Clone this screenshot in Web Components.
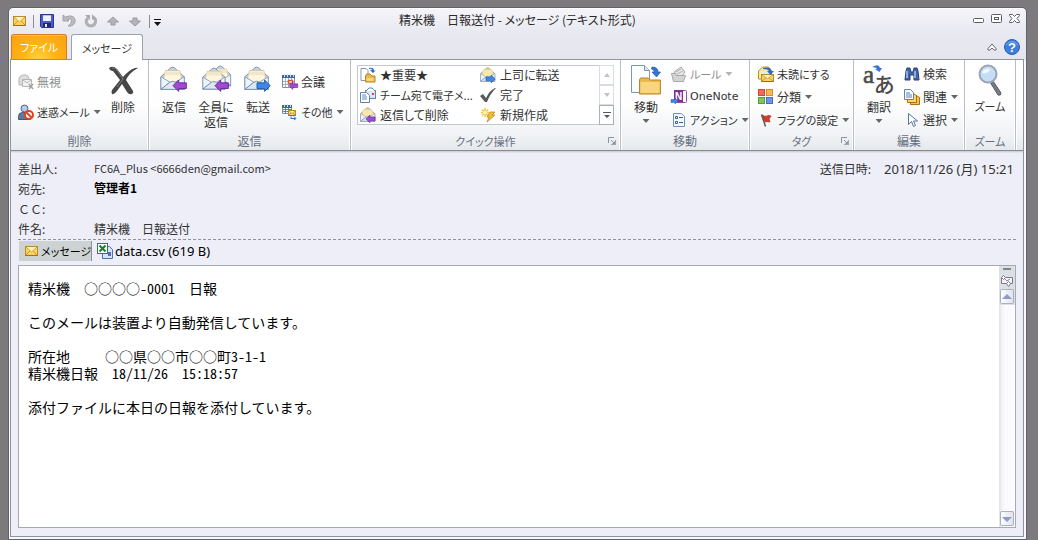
<!DOCTYPE html>
<html lang="ja">
<head>
<meta charset="utf-8">
<title>精米機　日報送付 - メッセージ (テキスト形式)</title>
<style>
  html { height: 100%; }
  body {
    margin: 0; min-height: 100%; box-sizing: border-box; padding: 7px 11px 0 8px; display: flex;
    background: #7d7a7d; color: #333;
    font: 12px/16px "Noto Sans CJK JP", sans-serif;
    font-feature-settings: "palt";
  }
  mail-window { flex: 1; min-width: 0; }
</style>
</head>
<body>
<mail-window></mail-window>

<template id="mail-window">
  <style>
    :host { display: flex; flex-direction: column; border: 1px solid #5f646c; border-radius: 5px 5px 0 0;
      background: linear-gradient(#f5f5f9 0, #e9e9f1 24px, #e4e5ee 52px, #f8f8fd 53px); box-shadow: inset 0 1px #fff, inset 1px 0 #fff; }
    .pane { flex: 1; display: flex; flex-direction: column; margin: 0 2px 2px 1px; border: 1px solid #8c949e; background: #eeeef8; min-height: 0; }
    message-body { flex: 1; margin: 4px 7px 8px; }
  </style>
  <title-bar>精米機　日報送付 - メッセージ (テキスト形式)</title-bar>
  <tab-strip></tab-strip>
  <main class="pane">
    <ribbon-bar></ribbon-bar>
    <message-header></message-header>
    <attachment-bar></attachment-bar>
    <message-body></message-body>
  </main>
</template>

<template id="title-bar">
  <style>
    :host { display: grid; grid-template-columns: 1fr auto 1fr; height: 26px; align-items: center; }
    .quick, .controls { display: flex; align-items: center; }
    .quick { padding-left: 2px; gap: 6px; }
    .controls { justify-content: flex-end; gap: 2px; padding-right: 4px; align-self: start; margin-top: 2px; }
    button { all: unset; display: flex; height: 16px; width: 16px; justify-content: center; }
    i { width: 1px; height: 13px; background: #8b8d94; margin: 0 -1px 0 0; }
    .menu { width: 8px; margin-left: -2px; }
    h1 { margin: 0; font: inherit; line-height: 16px; color: #2a2a2a; }
    h1 { margin-top: -2px; }
  </style>
  <div class="quick">
    <svg-icon name="mail"></svg-icon><i></i>
    <button aria-label="上書き保存"><svg-icon name="save"></svg-icon></button>
    <button aria-label="元に戻す"><svg-icon name="undo"></svg-icon></button>
    <button aria-label="繰り返し"><svg-icon name="redo"></svg-icon></button>
    <button aria-label="前のアイテム"><svg-icon name="up"></svg-icon></button>
    <button aria-label="次のアイテム"><svg-icon name="down"></svg-icon></button><i></i>
    <button class="menu" aria-label="カスタマイズ"><svg-icon name="custom"></svg-icon></button>
  </div>
  <h1><slot></slot></h1>
  <div class="controls">
    <button aria-label="最小化"><svg-icon name="min"></svg-icon></button>
    <button aria-label="最大化"><svg-icon name="max"></svg-icon></button>
    <button aria-label="閉じる"><svg-icon name="close"></svg-icon></button>
  </div>
</template>

<template id="tab-strip">
  <style>
    :host { display: flex; height: 25px; padding-left: 2px; padding-right: 6px; align-items: flex-end; font-size: 11px; }
    button { all: unset; box-sizing: border-box; text-align: center; }
    .file { width: 56px; height: 25px; border: 1px solid #df7a12; border-bottom: 0; border-radius: 3px 3px 0 0; color: #fff;
      background: radial-gradient(ellipse at 50% 110%, #ffd83e 0, #ffb414 45%, #fba014 100%); line-height: 24px; box-shadow: inset 0 1px #ffc25a; }
    .tab { width: 72px; height: 26px; margin: 0 0 -1px 4px; border: 1px solid #9aa2ac; border-bottom: 0; border-radius: 3px 3px 0 0; background: #fff; line-height: 24px; position: relative; z-index: 1; }
    .end { margin-left: auto; display: flex; gap: 6px; align-self: center; }
    .end button { height: 16px; }
  </style>
  <button class="file">ファイル</button>
  <button class="tab">メッセージ</button>
  <div class="end">
    <button aria-label="リボンの最小化"><svg-icon name="chevron"></svg-icon></button>
    <button aria-label="ヘルプ"><svg-icon name="help"></svg-icon></button>
  </div>
</template>

<template id="ribbon-bar">
  <style>
    :host { display: flex; height: 90px; border-bottom: 1px solid #858b90; box-shadow: 0 1px #cfd3d8, 0 2px #e0e3e9;
      background: linear-gradient(#fff 0, #fefefe 45px, #f0f2f5 75px, #e6e9ec 100%); }
    ribbon-group { min-width: 0; }
    .col { display: flex; flex-direction: column; gap: 1px; padding-top: 3px; }
    .two { gap: 8px; padding-top: 11px; }
    .delete { flex: 0 0 138px; --start: 7px; }
    .delete .col { width: 85px; }
    .reply { flex: 0 0 202px; --start: 4px; }
    .reply ribbon-button[large] { width: 42px; }
    .reply .col { margin-left: 3px; }
    .quick { flex: 0 0 270px; --start: 6px; }
    .move { flex: 0 0 129px; --start: 5px; }
    .tags { flex: 0 0 104px; --start: 8px; }
    .edit { flex: 0 0 111px; --start: 5px; }
    .move .col, .edit .col { margin-left: 5px; }
    .zoom { flex: 0 0 51px; --start: 5px; }
  </style>
  <ribbon-group class="delete" label="削除">
    <div class="col two">
      <ribbon-button icon="ignore" disabled>無視</ribbon-button>
      <ribbon-button icon="junk" menu kana>迷惑メール</ribbon-button>
    </div>
    <ribbon-button large icon="delete">削除</ribbon-button>
  </ribbon-group>
  <ribbon-group class="reply" label="返信">
    <ribbon-button large icon="reply">返信</ribbon-button>
    <ribbon-button large icon="replyall">全員に<br>返信</ribbon-button>
    <ribbon-button large icon="forward">転送</ribbon-button>
    <div class="col two">
      <ribbon-button icon="meeting">会議</ribbon-button>
      <ribbon-button icon="other" menu kana>その他</ribbon-button>
    </div>
  </ribbon-group>
  <ribbon-group class="quick" label="クイック操作" launcher kana><quick-steps></quick-steps></ribbon-group>
  <ribbon-group class="move" label="移動">
    <ribbon-button large icon="move" menu>移動</ribbon-button>
    <div class="col">
      <ribbon-button icon="rules" menu disabled kana>ルール</ribbon-button>
      <ribbon-button icon="onenote" latin>OneNote</ribbon-button>
      <ribbon-button icon="actions" menu kana>アクション</ribbon-button>
    </div>
  </ribbon-group>
  <ribbon-group class="tags" label="タグ" launcher kana>
    <div class="col">
      <ribbon-button icon="unread" kana>未読にする</ribbon-button>
      <ribbon-button icon="category" menu>分類</ribbon-button>
      <ribbon-button icon="flag" menu kana>フラグの設定</ribbon-button>
    </div>
  </ribbon-group>
  <ribbon-group class="edit" label="編集">
    <ribbon-button large icon="translate" menu>翻訳</ribbon-button>
    <div class="col">
      <ribbon-button icon="find">検索</ribbon-button>
      <ribbon-button icon="related" menu>関連</ribbon-button>
      <ribbon-button icon="select" menu>選択</ribbon-button>
    </div>
  </ribbon-group>
  <ribbon-group class="zoom" label="ズーム" kana>
    <ribbon-button large icon="zoom" kana>ズーム</ribbon-button>
  </ribbon-group>
</template>

<template id="ribbon-group">
  <style>
    :host { display: flex; flex-direction: column; box-sizing: border-box; border-right: 1px solid #b9bec5; box-shadow: inset -1px 0 #fff, 1px 0 #fff; }
    .items { display: flex; height: 72px; padding-left: var(--start); }
    footer { display: grid; grid-template-columns: 1fr auto 1fr; align-items: center; height: 18px; color: #66707f; }
    button { all: unset; grid-column: 3; justify-self: end; width: 8px; height: 8px; margin-right: 4px; display: flex; }
    span { grid-column: 2; }
    :host([kana]) span { font-size: 11px; }
    :host(:not([launcher])) button { display: none; }
  </style>
  <div class="items"><slot></slot></div>
  <footer><span></span><button aria-label="詳細"><svg-icon name="launcher"></svg-icon></button></footer>
</template>

<template id="ribbon-button">
  <style>
    :host { display: block; }
    button { all: unset; display: flex; align-items: center; gap: 3px; height: 22px; white-space: nowrap; }
    :host([large]) { width: 40px; padding-top: 4px; }
    :host([large]) button { flex-direction: column; height: auto; width: 100%; text-align: center; line-height: 15px; }
    .menu { display: none; flex: none; width: 7px; height: 4px; background: #666; clip-path: polygon(0 0, 100% 0, 50% 100%); margin-left: 1px; }
    :host([menu]) .menu { display: block; }
    :host([menu][large]) .menu { margin: 2px 0 0; }
    :host([disabled]) button { color: #8d8d8d; }
    :host([disabled]) .menu { background: #b5b5b5; }
    :host([kana]) span { font-size: 11px; }
    :host([latin]) span { font: 11px/16px "DejaVu Sans", sans-serif; }
  </style>
  <button><svg-icon></svg-icon><span><slot></slot></span><i class="menu"></i></button>
</template>

<template id="quick-steps">
  <style>
    :host { display: flex; width: 257px; height: 60px; margin-top: 5px; box-sizing: border-box; background: #fff; box-shadow: inset 0 0 0 1px #c3c8ce; }
    .list { display: grid; flex: 1; grid-template: repeat(3, 20px) / 120px 1fr; padding-left: 3px; }
    button { all: unset; display: flex; gap: 4px; align-items: center; white-space: nowrap; }
    .kana { font-size: 11px; }
    .scroll { width: 15px; display: grid; grid-template-rows: repeat(3, 20px); }
    .scroll button { justify-content: center; box-shadow: inset 0 0 0 1px #d9dde1; }
    .scroll button:last-child { box-shadow: inset 0 0 0 1px #aab0b8; }
  </style>
  <div class="list">
    <button><svg-icon name="important"></svg-icon>★重要★</button>
    <button><svg-icon name="boss"></svg-icon>上司に転送</button>
    <button class="kana"><svg-icon name="team"></svg-icon>チーム宛て電子メ...</button>
    <button><svg-icon name="done"></svg-icon>完了</button>
    <button><svg-icon name="replydel"></svg-icon>返信して削除</button>
    <button><svg-icon name="newstep"></svg-icon>新規作成</button>
  </div>
  <div class="scroll">
    <button aria-label="上へ"><svg-icon name="tinyup"></svg-icon></button>
    <button aria-label="下へ"><svg-icon name="tinydown"></svg-icon></button>
    <button aria-label="その他"><svg-icon name="more"></svg-icon></button>
  </div>
</template>

<template id="message-header">
  <style>
    :host { display: flex; justify-content: space-between; margin: 0 7px; padding: 8px 0 0; border-bottom: 1px dashed #92949a; }
    dl { margin: 0; display: grid; grid-template-columns: 76px auto; grid-auto-rows: 20px; line-height: 20px; }
    dd { margin: 0; }
    .sent { grid-template-columns: auto auto; column-gap: 13px; padding-right: 2px; }
    .sent dd { font: 13px/20px "Noto Sans", "Noto Sans CJK JP", sans-serif; }
    .to { font-weight: 700; color: #000; line-height: 18px; }
    .from { font-size: 11px; line-height: 18px; }
    .wide { font-feature-settings: "palt" 0; }
  </style>
  <dl>
    <dt>差出人:</dt><dd class="from">FC6A_Plus &lt;6666den@gmail.com&gt;</dd>
    <dt>宛先:</dt><dd class="to">管理者1</dd>
    <dt class="wide">ＣＣ:</dt><dd></dd>
    <dt>件名:</dt><dd>精米機　日報送付</dd>
  </dl>
  <dl class="sent"><dt>送信日時:</dt><dd>2018/11/26 (月) 15:21</dd></dl>
</template>

<template id="attachment-bar">
  <style>
    :host { display: flex; margin: 0 8px; height: 20px; padding-top: 1px; color: #000; white-space: nowrap; }
    button, a { all: unset; display: flex; align-items: center; gap: 2px; height: 20px; box-sizing: border-box; }
    button { width: 73px; padding-left: 4px; background: #cdd2d3; border-right: 1px solid #8c9296; font-size: 11px; }
    a { padding-left: 5px; font: 13px/16px "Noto Sans", sans-serif; }
  </style>
  <button><svg-icon name="mail"></svg-icon>メッセージ</button>
  <a href="#data.csv"><svg-icon name="csv"></svg-icon>data.csv (619 B)</a>
</template>

<template id="message-body">
  <style>
    :host { display: flex; border: 1px solid #a3abb4; background: #fff; min-height: 200px; color: #000; }
    article { flex: 1; padding: 14px 9px; font-size: 14px; line-height: 17px; white-space: pre-wrap; font-feature-settings: "palt" 0; }
    p { margin: 0; min-height: 17px; }
    .half { font-feature-settings: "hwid", "palt" 0; }
    aside { width: 16px; display: flex; flex-direction: column; justify-content: space-between; background: linear-gradient(90deg, #e4e4ec 1px, #f4f4f8 3px, #fcf9ff 6px); }
    .top { background: #dddfe6; display: flex; flex-direction: column; align-items: center; }
    .split { width: 8px; height: 2px; margin: 2px 0; background: #7e8786; }
    button { all: unset; display: flex; width: 14px; height: 15px; margin: 1px; border-radius: 2px; box-shadow: inset 0 0 0 1px #aab0bc; background: linear-gradient(90deg, #fff, #dfe1ea); align-items: center; justify-content: center; }
  </style>
  <article></article>
  <aside>
    <div class="top"><div class="split"></div><svg-icon name="ruler"></svg-icon><button aria-label="上へスクロール"><svg-icon name="sup"></svg-icon></button></div>
    <button aria-label="下へスクロール"><svg-icon name="sdown"></svg-icon></button>
  </aside>
</template>

<script>
const mini = (x, y, s) => `<g transform="translate(${x} ${y}) scale(${s})">
  <path d="M1 12 12 2q2-1.500 4 0l11 10v14H1z" fill="#c2d6ea" stroke="#7288a6"/>
  <path d="M4 14 6 5h16l2 9-8 7h-4z" fill="#fff6dc" stroke="#d6c69c"/><path d="M6 6h16l1 4H5z" fill="#efe6cc"/>
  <path d="M1 12v14l10-8zM27 12v14l-10-8z" fill="#edf5fc" stroke="#869bb5"/>
  <path d="M1 26 11 18q3-2 6 0l10 8z" fill="#dce9f5" stroke="#7288a6"/></g>`;
const left = (x, y, s) => `<path transform="translate(${x} ${y}) scale(${s})" d="M0 6 6 0v3h8v6H6v3z" fill="#a14ad0" stroke="#65269b"/>`;
const right = (x, y, s) => `<path transform="translate(${x} ${y}) scale(${s})" d="M14 6 8 0v3H0v6h8v3z" fill="#3f86e6" stroke="#2158ad"/>`;
const yenv = (x, y, w, h) => `<rect x="${x}" y="${y}" width="${w}" height="${h}" fill="#fbd45e" stroke="#b98a2e"/><path d="M${x + .5} ${y + .5} l${w / 2 - .5} ${h * .6} l${w / 2 - .5} ${-h * .6}z" fill="#fff3bd"/><path d="M${x} ${y} l${w / 2} ${h * .6} l${w / 2} ${-h * .6} M${x} ${y + h} l${w * .36} ${-h * .5} M${x + w} ${y + h} l${-w * .36} ${-h * .5}" fill="none" stroke="#c08c24" stroke-width=".8"/><path d="M${x} ${y + h}h${w}" stroke="#a86a12"/>`;
const folder = (x, y, w, h) => `<path d="M${x} ${y + h}V${y + 2}l1-2h${w * .35}l2 2h${w * .6 - 3}V${y + h}z" fill="#e9ba4b" stroke="#b9842b"/><path d="M${x + 1} ${y + h - 1}V${y + 4}H${x + w - 2}v${h - 5}z" fill="#f9d67d"/>`;
const gold = art => art.replace(/#c2d6ea/g, '#f7cf62').replace('#fff6dc', '#ffe9a3');
const ball = '<path d="M.5 15.500v-3q0-4 4-4h4q4 0 4 4v3z" fill="#62799b" stroke="#41587c"/><circle cx="6.500" cy="4.500" r="3.500" fill="#b5cbe5" stroke="#4b678f"/>';

const ICONS = {
  mail: [16, 16, yenv(2.5, 3.5, 12, 9)],
  save: [16, 16, '<path d="M1.500 1.500h13v13h-12l-1-1z" fill="#4b59d2" stroke="#2b3596"/><path d="M4 2h8v6H4z" fill="#eef2fd"/><path d="M4 2h8v1H4z" fill="#b6c2ee"/><path d="M4 10h8v4H4z" fill="#242a5c"/><path d="M6 11h2v3H6z" fill="#dfe4f6"/>'],
  undo: [16, 16, '<path d="M2 2v6h6L6.500 6.500Q10.500 5 10.500 8q0 3-3.500 5h3q5-2 4-6.500Q12.500 1 4.500 4z" fill="#bbbbc0" stroke="#a2a2a8"/>'],
  redo: [16, 16, '<path d="M5 5Q2.500 7 3.500 10q1.500 3 4.500 3 4-.5 4.500-4Q13 6 10.500 4.500" fill="none" stroke="#b0b0b5" stroke-width="3"/><path d="M9 1v5.500h5zM2 2h5v5z" fill="#a9a9af"/>'],
  up: [16, 16, '<path d="M8 4l5.500 5H10v3H6V9H2.500z" fill="#b4b4ba" stroke="#9999a0"/>'],
  down: [16, 16, '<path d="M8 13 2.500 8H6V5h4v3h3.500z" fill="#b4b4ba" stroke="#9999a0"/>'],
  custom: [8, 16, '<path d="M1 6h7v1H1zM1 9h7l-3.500 4z" fill="#111"/>'],
  min: [16, 16, '<rect x="3.500" y="8.500" width="10" height="4" rx="1" fill="#fff" stroke="#5a5d64"/>'],
  max: [16, 16, '<rect x="3.500" y="4.500" width="10" height="8" rx="1" fill="#fff" stroke="#5a5d64"/><rect x="6.500" y="7.500" width="4" height="2" fill="#fff" stroke="#5a5d64"/>'],
  close: [16, 16, '<path d="M3.500 4.500h3l2 2 2-2h3v1L11 8.500l2.500 3v1h-3l-2-2-2 2h-3v-1L6 8.500l-2.500-3z" fill="#fff" stroke="#5a5d64"/>'],
  chevron: [12, 16, '<path d="M2 9.500 6 5l4 4.500V11H8L6 9l-2 2H2z" fill="#fff" stroke="#63666b"/>'],
  help: [16, 16, '<circle cx="8" cy="8" r="7.500" fill="#3f7ddb" stroke="#2862bc"/><path d="M2 6q6-7 12 0" fill="none" stroke="#78a7ee"/><text x="8" y="12.500" text-anchor="middle" font-family="Liberation Sans" font-weight="700" font-size="13" fill="#fff">?</text>'],
  launcher: [8, 8, '<path d="M.5 6V.5H6" fill="none" stroke="#8a929b"/><path d="M3 3l3 3" fill="none" stroke="#8a929b"/><path d="M3 7.500h5M7.500 3v5" stroke="#a0a7af"/><path d="M4 7l3-3v3z" fill="#8a929b"/>'],
  ignore: [16, 16, '<path d="M1 5q0-3 4-4h3q3 1 3 4v6H1z" fill="#dedede" stroke="#b5b5b5"/><path d="M4.500 5.500h9v7h-9z" fill="#f1f1f1" stroke="#b5b5b5"/><path d="M5 6l4 3 4-3" fill="none" stroke="#b5b5b5"/><path d="M11 10l4 5M15 10l-4 5" stroke="#a3a3a3" stroke-width="1.500"/>'],
  junk: [16, 16, ball + '<circle cx="11" cy="11" r="4" fill="#fff" stroke="#e3431e" stroke-width="2"/><path d="M8 8l6 6" stroke="#e3431e" stroke-width="2"/>'],
  delete: [32, 32, '<path d="M2 4q4-3 8 1l6 8q6-7 12-9 2-.5 3 0-9 5-12 12l7 11q1 2-1 3-3 1-5-2l-5-8-5 7q-3 4-5 3-1-2 0-4l8-10-7-9q-3 0-4-3z" fill="#474747"/><path d="M5 4q3-1 5 2l6 9-6 8" fill="none" stroke="#7a7a7a"/>'],
  reply: [32, 32, mini(2, 2, .9) + left(15, 16, .95)],
  replyall: [32, 32, mini(9, 1, .8) + mini(2, 3, .85) + left(15, 16, .95)],
  forward: [32, 32, mini(2, 2, .9) + right(15, 16, .95)],
  meeting: [16, 16, '<path d="M.5 1.500h12v12H.5z" fill="#fff" stroke="#7b8fb3"/><path d="M0 1h13v3H0z" fill="#3d62a8"/><path d="M2 0h1v3H2zM5 0h1v3H5zM8 0h1v3H8zM11 0h1v3h-1z" fill="#cfe0fa"/><path d="M1 7.500h11M1 10.500h11M3.500 4v9M6.500 4v9M9.500 4v9" stroke="#9fb1cf"/><rect x="6.500" y="6.500" width="4" height="3" fill="#fff" stroke="#e0542b" stroke-width="1.500"/>' + left(7, 8, .62)],
  other: [16, 16, '<path d="M.5 1.500h9v8h-9z" fill="#fff" stroke="#7b8fb3"/><path d="M0 1h10v3H0z" fill="#3d62a8"/><path d="M2 0h1v3H2zM5 0h1v3H5zM8 0h1v3H8z" fill="#cfe0fa"/><path d="M1 5.500h9M1 7.500h9M3.500 4v5M6.500 4v5" stroke="#5f7fb6"/>' + yenv(6.5, 6.5, 7, 5) + '<path d="M9 12.500v2h4M12 12.500l2 2-2 1.500" fill="none" stroke="#2e69c2"/>'],
  important: [16, 16, '<path d="M1 1.500h5l2 2v10H1z" fill="#fff" stroke="#8796ab"/><path d="M9 1q5-1 5 3l2-1-3 3-3-3h2q0-2-3-1z" fill="#2e69c2"/>' + folder(5.5, 7, 10, 8)],
  boss: [16, 16, gold(mini(0, 0, .55)) + right(6, 8, .65)],
  team: [16, 16, '<rect x="5.500" y="3.500" width="10" height="8" fill="#d9e8f8" stroke="#6484ad"/><path d="M6 4l3-3h3l3 3" fill="#fff" stroke="#6484ad"/><rect x="12" y="6" width="2" height="2" fill="#e0442a"/><path d="M.5 5.500h6l3 3v7h-9z" fill="#fff" stroke="#6484ad"/><path d="M2 8h4M2 10h5M2 12h5" stroke="#5b88c4"/>'],
  done: [16, 16, '<path d="M0 9l3-2 3 4Q10 3 15 1h1Q10 7 7 15H5z" fill="#5a5a5a"/>'],
  replydel: [16, 16, gold(mini(0, 0, .55)) + left(6, 8, .65)],
  newstep: [16, 16, '<path d="M5 1v9M1 5.500h8M2 2.500l6 6M8 2.500l-6 6" stroke="#f3c63d" stroke-width="1.500"/><circle cx="5" cy="5.500" r="2" fill="#fff4b5"/><path d="M10 5h5l-3 3h3l-8 7 2-5H7z" fill="#f7bd35" stroke="#b97b1d" stroke-width=".7"/>'],
  tinyup: [8, 6, '<path d="M4 1l3 4H1z" fill="#bfc3c8"/>'],
  tinydown: [8, 6, '<path d="M4 5L1 1h6z" fill="#bfc3c8"/>'],
  more: [8, 8, '<path d="M0 1h8v1H0zM1 4h6L4 7z" fill="#54585e"/>'],
  move: [32, 32, '<path d="M1.500 1.500h13l5 5v22h-18z" fill="#fbfdff" stroke="#7f95b2"/><path d="M14.500 1.500v5h5" fill="#dbe6f2" stroke="#7f95b2"/><path d="M22 3q6 0 6 5h2.500L26.500 13 22 8h2.500q0-2-3-3z" fill="#3474d4" stroke="#2456a5" stroke-width=".7"/>' + folder(9.5, 14, 22, 16)],
  rules: [16, 16, '<path d="M3 6l7-5 4 5-3 4H5z" fill="#e6e6e6" stroke="#a8a8a8"/><path d="M5 6l5-3M6 8l6-3" stroke="#b5b5b5"/><path d="M.5 7.500h4l1 2h9l-2 6h-10z" fill="#d3d3d3" stroke="#a8a8a8"/>'],
  onenote: [16, 16, '<rect x="4.500" y="1.500" width="11" height="12" rx="1" fill="#fff" stroke="#9a4aa5"/><path d="M3 1h9v12H3z" fill="#82308f"/><text x="7.500" y="11" text-anchor="middle" font-family="Liberation Sans" font-weight="700" font-size="10" fill="#fff">N</text>' + right(0, 9, .5)],
  actions: [16, 16, '<path d="M2.500 1.500h8l3 3v10h-11z" fill="#f2f7fc" stroke="#7290b6"/><path d="M4.500 4.500h2v2h-2zM4.500 9.500h2v2h-2z" fill="#fff" stroke="#3d5d8d"/><path d="M8 5.500h4M8 10.500h4" stroke="#3d5d8d"/>'],
  unread: [16, 16, '<path d="M.5 13V5l4-4h6l3 4v8z" fill="#ffe9a3" stroke="#b98b2c"/><path d="M3 5h8v6H3z" fill="#dceafa"/>' + yenv(3.5, 8.5, 12, 7) + '<path d="M5 2q8-2 8.500 3H16l-3.500 4L9 5h2q-1-2-6-2z" fill="#2e69c2"/>'],
  category: [16, 16, '<rect x=".5" y=".5" width="6" height="6" fill="#ef6a5c" stroke="#d54839"/><rect x="8.500" y=".5" width="6" height="6" fill="#f7b654" stroke="#df8e29"/><rect x=".5" y="8.500" width="6" height="6" fill="#81c65a" stroke="#56a032"/><rect x="8.500" y="8.500" width="6" height="6" fill="#6a95ea" stroke="#416cc9"/>'],
  flag: [16, 16, '<path d="M4 3q3 2 5 1t4 0l-2 3 1 3q-3-1-5 0z" fill="#dd3b22" stroke="#a72a18" stroke-width=".7"/><path d="M3.500 2.500l4 12" stroke="#5c5c5c" stroke-width="1.500"/>'],
  translate: [32, 32, '<text x="0" y="19" font-family="Liberation Serif" font-size="25" fill="#4b4b4b" stroke="#4b4b4b" stroke-width=".6">a</text><text x="11" y="28" font-family="Noto Sans CJK JP" font-weight="500" font-size="21" fill="#4b4b4b">あ</text><path d="M9 3q7-4 8 1h2l-2.500 4-4.500-3h2q-1-2-5-2z" fill="#3474d4"/>'],
  find: [16, 16, '<path d="M2 5l1-3h3l1 4h2l1-4h3l1 3 1 9h-5V9H6v5H1z" fill="#4264a6" stroke="#263f77"/><path d="M3 5v7M11 5v7" stroke="#a9c3ee" stroke-width="1.500"/>'],
  related: [16, 16, '<path d="M6.500 6.500h6l3 2v7h-9z" fill="#f7c24a" stroke="#a8701b"/><path d="M3.500 4.500h6l3 2v7h-9z" fill="#ffd56a" stroke="#a8701b"/><path d="M.5.500h6l3 3v7h-9z" fill="#f5faff" stroke="#6484ad"/><path d="M2 4h4M2 6h6M2 8h6" stroke="#5b88c4"/>'],
  select: [16, 16, '<path d="M4.500 1.500v11l3-3 2 5 2-1-2-4.500h4z" fill="#fff" stroke="#5674aa"/>'],
  zoom: [32, 32, '<path d="M16 18l3-1 8 12q0 3-3 2z" fill="#777c86" stroke="#545861"/><circle cx="14" cy="10" r="8.500" fill="#c5def6" stroke="#9ba5b4" stroke-width="2"/><path d="M8 9q2-5 8-4-1 5-8 4z" fill="#f3faff"/>'],
  csv: [16, 16, '<path d="M5.500 3.500h7l3 3v9h-10z" fill="#d4e4f7" stroke="#4e73a8"/><rect x=".5" y=".5" width="10" height="10" fill="#fff" stroke="#27843b"/><path d="M2.500 2.500l6 6M8.500 2.500l-6 6" stroke="#1e7c34" stroke-width="2"/><path d="M11 9h3v4h-3z" fill="#4e73a8"/>'],
  ruler: [12, 16, '<path d="M.5 5.500h11v6H.5z" fill="#f8f2fb" stroke="#7c7b82"/><path d="M2.500 3.500l2 2-2 2-2-2zM7.500 9.500l2 2-2 3-2-3z" fill="#fff" stroke="#7c7b82"/><path d="M4 7l2 2 3-2" fill="none" stroke="#8d8aa0"/>'],
  sup: [10, 6, '<path d="M5 0l5 5H0z" fill="#8f9bc9"/>'],
  sdown: [10, 6, '<path d="M5 6L0 1h10z" fill="#8f9bc9"/>'],
};

class SvgIcon extends HTMLElement {
  static observedAttributes = ['name'];
  constructor() { super(); this.attachShadow({ mode: 'open' }); }
  attributeChangedCallback() {
    const [w, h, art] = ICONS[this.getAttribute('name')];
    this.shadowRoot.innerHTML = `<style>:host{display:block;flex:none}svg{display:block;overflow:visible}</style><svg width="${w}" height="${h}" viewBox="0 0 ${w} ${h}" aria-hidden="true">${art}</svg>`;
  }
}
customElements.define('svg-icon', SvgIcon);

class TemplateElement extends HTMLElement {
  constructor() {
    super();
    this.attachShadow({ mode: 'open' }).append(document.getElementById(this.localName).content.cloneNode(true));
  }
}
class RibbonGroup extends TemplateElement {
  connectedCallback() { this.shadowRoot.querySelector('span').textContent = this.getAttribute('label'); }
}
class RibbonButton extends TemplateElement {
  connectedCallback() {
    this.shadowRoot.querySelector('svg-icon').setAttribute('name', this.getAttribute('icon'));
    this.shadowRoot.querySelector('button').disabled = this.hasAttribute('disabled');
  }
}
// Plain-text mail: ASCII runs are set half-width so that they line up with the full-width grid.
class MessageBody extends TemplateElement {
  connectedCallback() {
    const lines = ['精米機　○○○○-0001　日報', '', 'このメールは装置より自動発信しています。', '', '所在地　　 ○○県○○市○○町3-1-1', '精米機日報　18/11/26　15:18:57', '', '添付ファイルに本日の日報を添付しています。'];
    this.shadowRoot.querySelector('article').innerHTML =
      lines.map(text => `<p>${text.replace(/[ -~]+/g, '<span class="half">$&</span>')}</p>`).join('');
  }
}
customElements.define('ribbon-group', RibbonGroup);
customElements.define('ribbon-button', RibbonButton);
customElements.define('message-body', MessageBody);
for (const tag of ['quick-steps', 'title-bar', 'tab-strip', 'ribbon-bar', 'message-header', 'attachment-bar', 'mail-window'])
  customElements.define(tag, class extends TemplateElement {});
</script>
</body>
</html>
